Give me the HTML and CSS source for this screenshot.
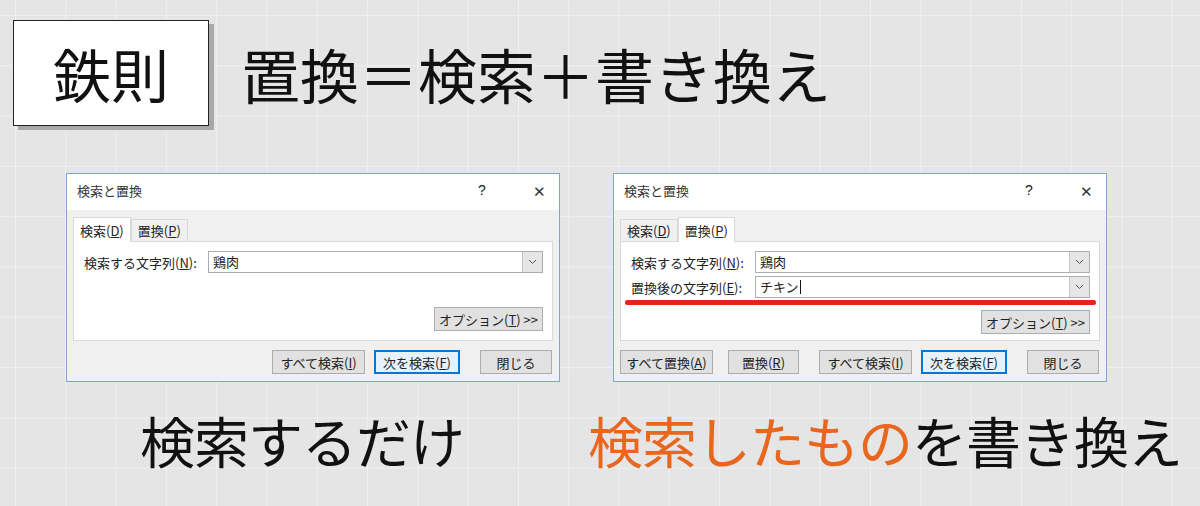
FILE: index.html
```html
<!DOCTYPE html>
<html lang="ja">
<head>
  <meta charset="UTF-8">
  <meta name="viewport" content="width=device-width, initial-scale=1.0">
  <title>置換</title>
  <link rel="stylesheet" href="styles.css">
</head>
<body>
  <div class="slide">
    <div class="header">
      <div class="rule-box">鉄則</div>
      <h1 class="headline">置換＝検索＋書き換え</h1>
    </div>

    <div class="dialogs">
      <!-- 検索タブ -->
      <div class="dialog">
        <div class="dialog-title">
          <span class="title-text">検索と置換</span>
          <span class="title-help">?</span>
          <span class="title-close">✕</span>
        </div>
        <div class="dialog-body">
          <div class="tabs">
            <span class="tab active">検索(<u>D</u>)</span>
            <span class="tab">置換(<u>P</u>)</span>
          </div>
          <div class="panel">
            <div class="field">
              <label class="field-label">検索する文字列(<u>N</u>):</label>
              <div class="combo">
                <span class="combo-text">鶏肉</span>
                <span class="combo-btn"><svg width="9" height="6" viewBox="0 0 9 6"><path d="M1 1 L4.5 4.5 L8 1" fill="none" stroke="#555" stroke-width="1"/></svg></span>
              </div>
            </div>
            <div class="panel-opts opts-low">
              <button class="btn">オプション(<u>T</u>) &gt;&gt;</button>
            </div>
          </div>
          <div class="actions">
            <button class="btn btn-find-all">すべて検索(<u>I</u>)</button>
            <button class="btn btn-default">次を検索(<u>F</u>)</button>
            <button class="btn btn-close">閉じる</button>
          </div>
        </div>
      </div>

      <!-- 置換タブ -->
      <div class="dialog">
        <div class="dialog-title">
          <span class="title-text">検索と置換</span>
          <span class="title-help">?</span>
          <span class="title-close">✕</span>
        </div>
        <div class="dialog-body">
          <div class="tabs">
            <span class="tab">検索(<u>D</u>)</span>
            <span class="tab active">置換(<u>P</u>)</span>
          </div>
          <div class="panel">
            <div class="field">
              <label class="field-label">検索する文字列(<u>N</u>):</label>
              <div class="combo">
                <span class="combo-text">鶏肉</span>
                <span class="combo-btn"><svg width="9" height="6" viewBox="0 0 9 6"><path d="M1 1 L4.5 4.5 L8 1" fill="none" stroke="#555" stroke-width="1"/></svg></span>
              </div>
            </div>
            <div class="field field-second">
              <label class="field-label">置換後の文字列(<u>E</u>):</label>
              <div class="combo">
                <span class="combo-text">チキン<span class="caret"></span></span>
                <span class="combo-btn"><svg width="9" height="6" viewBox="0 0 9 6"><path d="M1 1 L4.5 4.5 L8 1" fill="none" stroke="#555" stroke-width="1"/></svg></span>
              </div>
            </div>
            <div class="marker"></div>
            <div class="panel-opts">
              <button class="btn">オプション(<u>T</u>) &gt;&gt;</button>
            </div>
          </div>
          <div class="actions actions-wide">
            <button class="btn btn-find-all">すべて置換(<u>A</u>)</button>
            <button class="btn btn-replace">置換(<u>R</u>)</button>
            <button class="btn btn-find-all">すべて検索(<u>I</u>)</button>
            <button class="btn btn-default">次を検索(<u>F</u>)</button>
            <button class="btn btn-close">閉じる</button>
          </div>
        </div>
      </div>
    </div>

    <div class="captions">
      <p class="caption caption-left">検索するだけ</p>
      <p class="caption caption-right"><span class="accent">検索したもの</span>を書き換え</p>
    </div>
  </div>
</body>
</html>
```

FILE: styles.css
```css
* {
  margin: 0;
  padding: 0;
  box-sizing: border-box;
}

body {
  width: 1200px;
  height: 506px;
  overflow: hidden;
  font-family: "Noto Sans CJK JP", "Noto Sans", sans-serif;
  color: #111;
  background-color: #e5e5e5;
  background-image:
    linear-gradient(to right, #f0f0f0 1px, transparent 1px),
    linear-gradient(to bottom, #f0f0f0 1px, transparent 1px);
  background-size: 50.3px 50.3px;
  background-position: 15px 15px;
}

.slide {
  padding-top: 20px;
}

/* 見出し */
.header {
  display: flex;
  align-items: center;
  padding-left: 13px;
}

.rule-box {
  width: 196px;
  height: 106px;
  display: flex;
  align-items: center;
  justify-content: center;
  font-size: 58px;
  background: #fff;
  border: 1px solid #222;
  box-shadow: 5px 4px 0 #a8a8a8;
}

.headline {
  margin-left: 32px;
  font-size: 59px;
  font-weight: 400;
  line-height: 1;
  color: #111;
}

/* ダイアログ */
.dialogs {
  display: flex;
  gap: 53px;
  margin-top: 47px;
  padding-left: 66px;
}

.dialog {
  width: 494px;
  height: 209px;
  border: 1px solid #7ea6d4;
  background: #f0f0f0;
  font-size: 13px;
  color: #222;
}

.dialog-title {
  display: flex;
  align-items: center;
  height: 36px;
  padding: 0 0 4px 10px;
  background: #fff;
}

.title-text {
  flex: 1;
  color: #333;
}

.title-help {
  width: 20px;
  font-size: 14px;
  font-family: "Liberation Sans", sans-serif;
  margin-right: 35px;
}

.title-close {
  width: 26px;
  font-size: 15px;
  color: #333;
}

.dialog-body {
  padding: 6px 6px 0;
}

.tabs {
  display: flex;
  align-items: flex-end;
  height: 25px;
}

.tab {
  height: 22px;
  padding: 0 6px;
  line-height: 21px;
  border: 1px solid #d9d9d9;
  border-bottom: none;
  background: #f0f0f0;
}

.tab.active {
  height: 25px;
  line-height: 25px;
  background: #fff;
  position: relative;
  top: 1px;
}

.panel {
  height: 100px;
  padding: 9px 9px 0;
  background: #fff;
  border: 1px solid #d9d9d9;
}

.field {
  display: flex;
  align-items: center;
  height: 22px;
}

.field-second {
  margin-top: 3px;
}

.field-label {
  width: 125px;
  padding-left: 1px;
}

.combo {
  flex: 1;
  display: flex;
  height: 22px;
  border: 1px solid #abadb3;
}

.combo-text {
  flex: 1;
  padding-left: 4px;
  line-height: 20px;
}

.caret {
  display: inline-block;
  width: 1px;
  height: 14px;
  margin-left: 1px;
  vertical-align: -2px;
  background: #111;
}

.combo-btn {
  width: 20px;
  display: flex;
  align-items: center;
  justify-content: center;
  background: #e6e6e6;
  border-left: 1px solid #c4c4c4;
}

.marker {
  height: 5px;
  margin: 2px -6px 0 -5px;
  border-radius: 3px;
  background: #e5231b;
}

.panel-opts {
  display: flex;
  justify-content: flex-end;
  margin-top: 5px;
}

.opts-low {
  margin-top: 34px;
}

.btn {
  height: 24px;
  padding: 0 4px;
  white-space: nowrap;
  font-family: "Noto Sans CJK JP", sans-serif;
  font-size: 13px;
  color: #222;
  background: #e1e1e1;
  border: 1px solid #adadad;
}

.actions {
  display: flex;
  justify-content: flex-end;
  gap: 9px;
  margin-top: 9px;
  padding-right: 1px;
}

.actions-wide {
  justify-content: flex-start;
  gap: 0;
}

.btn-find-all {
  width: 93px;
}

.btn-replace {
  width: 71px;
  margin-left: 15px;
}

.actions-wide .btn-find-all + .btn-replace + .btn-find-all {
  margin-left: 20px;
}

.btn-default {
  width: 86px;
  border: 2px solid #0078d7;
  background: #e5f1fb;
}

.actions-wide .btn-default {
  margin-left: 9px;
}

.btn-close {
  width: 72px;
  margin-left: 11px;
}

.actions-wide .btn-close {
  margin-left: 20px;
}

/* キャプション */
.captions {
  display: flex;
  margin-top: 24px;
}

.caption {
  font-size: 55px;
  line-height: 66px;
  letter-spacing: -1px;
}

.caption-left {
  margin-left: 140px;
}

.caption-right {
  margin-left: 124px;
}

.accent {
  color: #e8661e;
}
```
